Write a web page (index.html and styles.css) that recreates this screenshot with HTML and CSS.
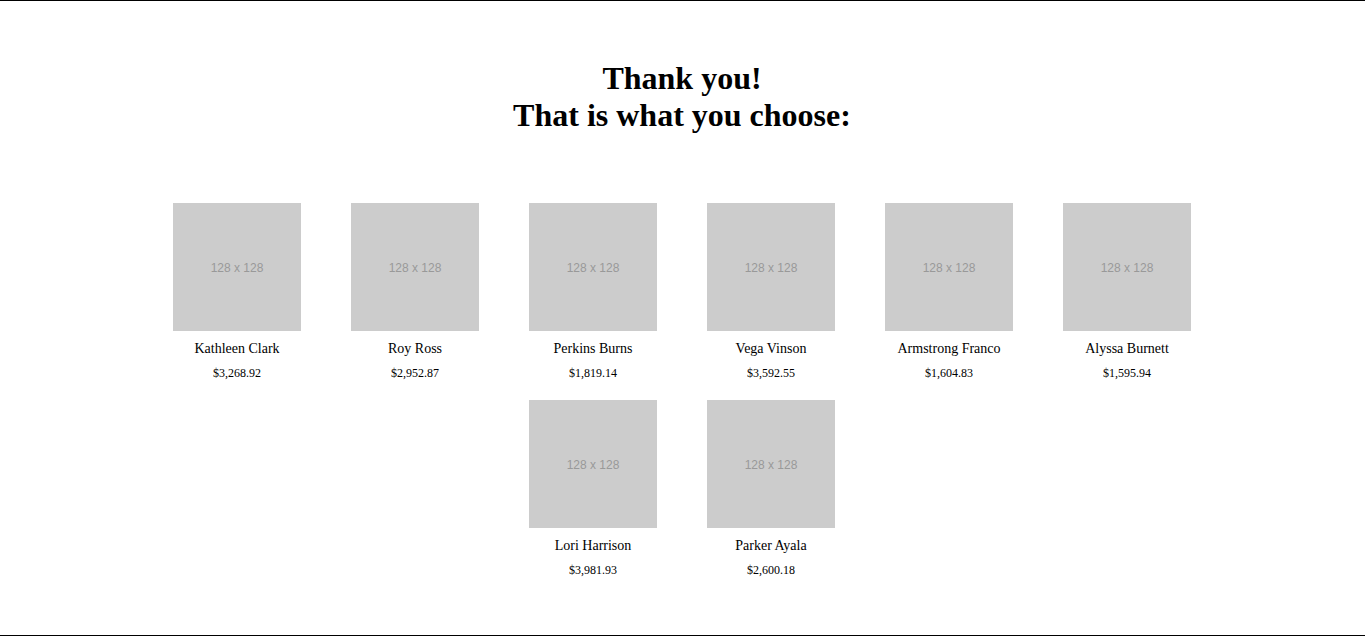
FILE: index.html
```html
<!DOCTYPE html>
<html>
<head>
<meta charset="utf-8">
<link rel="stylesheet" href="styles.css">
</head>
<body>
<div class="page">
  <h1 class="title">Thank you!<br>That is what you choose:</h1>
  <div class="grid">
    <div class="item"><div class="thumb">128 x 128</div><div class="name">Kathleen Clark</div><div class="price">$3,268.92</div></div>
    <div class="item"><div class="thumb">128 x 128</div><div class="name">Roy Ross</div><div class="price">$2,952.87</div></div>
    <div class="item"><div class="thumb">128 x 128</div><div class="name">Perkins Burns</div><div class="price">$1,819.14</div></div>
    <div class="item"><div class="thumb">128 x 128</div><div class="name">Vega Vinson</div><div class="price">$3,592.55</div></div>
    <div class="item"><div class="thumb">128 x 128</div><div class="name">Armstrong Franco</div><div class="price">$1,604.83</div></div>
    <div class="item"><div class="thumb">128 x 128</div><div class="name">Alyssa Burnett</div><div class="price">$1,595.94</div></div>
    <div class="item"><div class="thumb">128 x 128</div><div class="name">Lori Harrison</div><div class="price">$3,981.93</div></div>
    <div class="item"><div class="thumb">128 x 128</div><div class="name">Parker Ayala</div><div class="price">$2,600.18</div></div>
  </div>
</div>
</body>
</html>
```

FILE: styles.css
```css
html, body {
  margin: 0;
  padding: 0;
  background: #fff;
}
body {
  font-family: "Liberation Serif", "Times New Roman", serif;
  color: #000;
}
.page {
  box-sizing: border-box;
  height: 636px;
  border-top: 1px solid #000;
  border-bottom: 1px solid #000;
  padding-top: 59px;
  padding-right: 1px;
  overflow: hidden;
}
.title {
  margin: 0;
  font-size: 32px;
  font-weight: bold;
  text-align: center;
  line-height: 36.8px;
}
.grid {
  max-width: 1068px;
  margin: 69px auto 0;
  display: flex;
  flex-wrap: wrap;
  justify-content: center;
  column-gap: 50px;
  row-gap: 19px;
}
.item {
  width: 128px;
  display: flex;
  flex-direction: column;
  align-items: center;
  text-align: center;
}
.thumb {
  box-sizing: border-box;
  width: 128px;
  height: 128px;
  padding-top: 3px;
  background: #ccc;
  color: #999;
  font-family: "Liberation Sans", Arial, sans-serif;
  font-size: 12px;
  display: flex;
  align-items: center;
  justify-content: center;
}
.name {
  margin-top: 10px;
  font-size: 14px;
  white-space: nowrap;
}
.price {
  margin-top: 9px;
  font-size: 12px;
}
```
